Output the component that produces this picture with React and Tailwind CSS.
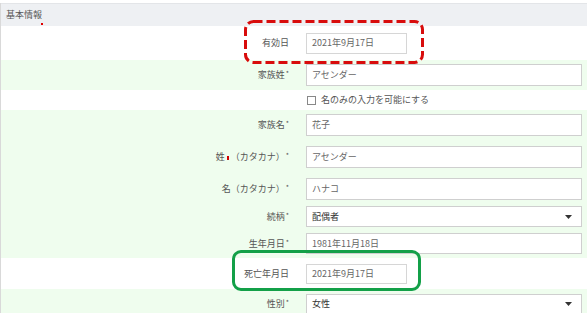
import React from 'react';

const font = { fontFamily: '"Noto Sans CJK JP", "Noto Sans", sans-serif' };

function Req() {
	return <span className="text-[7px] align-top ml-[1px]">*</span>;
}

function Row({ label, green, h, children }) {
	return (
		<div className={`flex items-center ${green ? 'bg-[#effdee]' : 'bg-white'} ${h}`}>
			<div className="w-[290px] shrink-0 text-right text-[9px] text-[#555] pr-[2px]">{label}</div>
			<div className="flex-1 pl-[15px] pr-[5px] flex items-center">{children}</div>
		</div>
	);
}

function TextBox({ value, w = 'w-full', h = 'h-[22px]', dim }) {
	return (
		<div className={`${w} ${h} bg-white border ${dim ? 'border-[#d6d6d6]' : 'border-[#cfcfcf]'} flex items-center pl-[5px] text-[9px] text-[#666]`}>
			{value}
		</div>
	);
}

function SelectBox({ value, h = 'h-[21px]' }) {
	return (
		<div className={`w-full ${h} bg-white border border-[#cfcfcf] flex items-center justify-between pl-[5px] pr-[9px] text-[9px] text-[#333]`}>
			<span>{value}</span>
			<svg width="7" height="4" viewBox="0 0 7 4"><path d="M0 0h7L3.5 4z" fill="#333" /></svg>
		</div>
	);
}

export default function App() {
	return (
		<div className="relative w-[587px] h-[313px] overflow-hidden bg-white" style={font}>
			<div className="mt-[3px] border-l border-[#d9d9d9] h-[310px]">
				{/* section header */}
				<div className="relative h-[23px] bg-[#eef0f3] border-t border-[#e3e5e8] flex items-center pl-[5px] text-[9px] text-[#555]">
					基本情報
					<span className="absolute left-[40px] top-[19px] w-[2px] h-[2px] bg-[#e00000]" />
				</div>

				<Row label="有効日" h="h-[34px]">
					<TextBox value="2021年9月17日" w="w-[101px]" h="h-[21px]" dim />
				</Row>
				<Row label={<>家族姓<Req /></>} green h="h-[30px]">
					<TextBox value="アセンダー" />
				</Row>
				<div className="h-[20px] bg-white flex items-center pl-[306px] text-[9px] text-[#555]">
					<span className="w-[9px] h-[9px] border border-[#888] bg-white mr-[5px]" />
					名のみの入力を可能にする
				</div>
				<Row label={<>家族名<Req /></>} green h="h-[30px]">
					<TextBox value="花子" />
				</Row>
				<Row
					label={<>姓<span className="inline-block w-[2px] h-[4px] bg-[#d00000] mx-[2px] align-middle" />（カタカナ）<Req /></>}
					green
					h="h-[34px]"
				>
					<TextBox value="アセンダー" />
				</Row>
				<Row label={<>名（カタカナ）<Req /></>} green h="h-[30px]">
					<TextBox value="ハナコ" />
				</Row>
				<Row label={<>続柄<Req /></>} green h="h-[25px]">
					<SelectBox value="配偶者" h="h-[21px]" />
				</Row>
				<Row label={<>生年月日<Req /></>} green h="h-[29px]">
					<TextBox value="1981年11月18日" h="h-[21px]" />
				</Row>
				<Row label="死亡年月日" h="h-[31px]">
					<TextBox value="2021年9月17日" w="w-[101px]" h="h-[20px]" dim />
				</Row>
				<Row label={<>性別<Req /></>} green h="h-[30px]">
					<SelectBox value="女性" h="h-[20px]" />
				</Row>
			</div>

			{/* annotation: red dashed box */}
			<svg className="absolute left-[244px] top-[20px]" width="180" height="44" viewBox="0 0 180 44">
				<rect x="1.5" y="1.5" width="177" height="41" rx="8" fill="none" stroke="#d80c0c" strokeWidth="3" strokeDasharray="9 4" />
			</svg>
			{/* annotation: green box */}
			<div className="absolute left-[232px] top-[250px] w-[189px] h-[41px] border-[3px] border-[#13a048] rounded-[9px]" />
		</div>
	);
}
